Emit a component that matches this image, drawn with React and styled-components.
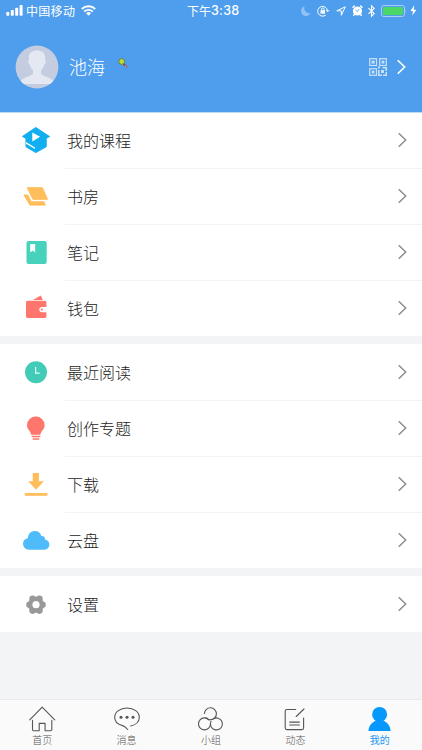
import React from "react";
import styled, { createGlobalStyle } from "styled-components";

const GlobalStyle = createGlobalStyle`
  *, *::before, *::after { box-sizing: border-box; }
  body {
    margin: 0;
    background: #f3f4f6;
    font-family: "Noto Sans CJK SC", sans-serif;
  }
`;

const Screen = styled.div`
  width: 422px;
  height: 750px;
  display: flex;
  flex-direction: column;
  overflow: hidden;
  background: #f3f4f6;
`;

const Header = styled.header`
  position: relative;
  flex: none;
  height: 112px;
  background: #4e9eed;
  color: #fff;
  box-shadow: 0 1px 0 #bcdcf9;
`;

const StatusBar = styled.div`
  display: grid;
  grid-template-columns: 187px 1fr auto;
  align-items: center;
  height: 21px;
  padding-right: 5px;
  font-size: 12px;
  line-height: 21px;
`;

const Carrier = styled.div`
  display: flex;
  align-items: center;
  padding-left: 6px;
  letter-spacing: 0.3px;

  span { margin: 0 6px 0 3px; }
`;

const Clock = styled.time`
  display: flex;
  white-space: nowrap;
  font-size: 12px;
`;

const ClockDigits = styled.span`
  font: 500 12.5px/21px Inter, sans-serif;
  letter-spacing: 0.25px;
`;

const StatusIcons = styled.div`
  display: flex;
  align-items: center;
`;

const Glyph = styled.svg`
  display: block;
  flex: none;
  width: ${(p) => p.$w}px;
  height: ${(p) => p.$h}px;
  margin-left: ${(p) => p.$gap || 0}px;
  overflow: visible;
`;

const Profile = styled.div`
  display: flex;
  align-items: center;
  height: 91px;
  padding: 0 16px 0 15px;
`;

const Name = styled.div`
  margin-left: 10px;
  padding-bottom: 2px;
  font-size: 18px;
  font-weight: 300;
  line-height: 26px;
`;

const BadgeIcon = styled(Glyph)`
  align-self: flex-start;
  margin-top: 37px;
`;

const Spacer = styled.div`
  flex: 1;
`;

const Group = styled.section`
  flex: none;
  margin-bottom: 8px;
  background: #fff;
`;

const Row = styled.div`
  display: flex;
  align-items: center;
  height: 56px;
  padding-left: 21px;
`;

const RowBody = styled.div`
  flex: 1;
  display: flex;
  align-items: center;
  justify-content: space-between;
  height: 56px;
  margin-left: 14px;
  padding: 0 15px 0 2px;
  box-shadow: 0 1px 0 ${(p) => (p.$last ? "transparent" : "#f3f3f4")};
`;

const RowLabel = styled.span`
  padding-bottom: 1px;
  font-size: 16px;
  font-weight: 300;
  line-height: 24px;
  color: #1c1c1c;
`;

const TabBar = styled.nav`
  flex: none;
  display: grid;
  grid-template-columns: repeat(5, 1fr);
  height: 50px;
  margin-top: auto;
  background: #fafafa;
  box-shadow: 0 -1px 0 #e9eaed;
`;

const Tab = styled.div`
  display: flex;
  flex-direction: column;
  align-items: center;
  padding-top: 5px;
  font-size: 10px;
  font-weight: ${(p) => (p.$active ? 400 : 300)};
  line-height: 14px;
  color: ${(p) => (p.$active ? "#2497f3" : "#555")};
`;

const Chevron = ({ color = "#929292", gap = 0 }) => (
  <Glyph $w={10} $h={16} $gap={gap} viewBox="0 0 10 16" fill="none" stroke={color} strokeWidth="1.6">
    <path d="M1.7 1.2 8.7 8 1.7 14.8" />
  </Glyph>
);

const Icon = ({ children, ...rest }) => (
  <Glyph $w={30} $h={30} viewBox="0 0 30 30" {...rest}>{children}</Glyph>
);

const icons = {
  course: (
    <Icon>
      <path fill="#11aef0" stroke="#11aef0" strokeWidth="1" strokeLinejoin="round" d="M14.8 2.5 28.5 11.5 25.2 13.4V21.8L14.8 27.6 5 21.8V13.4L1.5 11.4Z" />
      <path fill="#fff" d="M11.3 7.6v8.8l7.8-4.6ZM5 17l9 5.400v1.700L5 18.700Z" />
    </Icon>
  ),
  books: (
    <Icon fill="#ffbe5c" stroke="#ffbe5c" strokeWidth="1" strokeLinejoin="round">
      <path d="M6.2 6.7H21.4L26.5 18.3H11.9Z" />
      <path d="M2.9 14H6.8L10.2 20.8H23L24.3 24.1H9Z" />
    </Icon>
  ),
  note: (
    <Icon>
      <rect x="5.500" y="4" width="20.2" height="23" rx="2" fill="#46d2bb" />
      <path fill="#fff" d="M9.2 7h5v8.4l-2.5-2-2.5 2Z" />
    </Icon>
  ),
  wallet: (
    <Icon>
      <path fill="#ff766d" d="M11.8 7 19.8 2.6 21.8 7Z" />
      <rect x="5" y="7.7" width="20.4" height="17.2" rx="1.6" fill="#ff766d" />
      <path fill="#fff" d="M26 14H20.9a2.6 2.6 0 0 0 0 5.2H26Z" />
      <circle cx="20.9" cy="16.6" r="1" fill="#ff766d" />
    </Icon>
  ),
  recent: (
    <Icon>
      <circle cx="15" cy="15.3" r="11" fill="#42ccb7" />
      <path fill="none" stroke="#e5fffa" strokeWidth="1.2" d="M14.6 10v6.2h4" />
    </Icon>
  ),
  idea: (
    <Icon>
      <path fill="#ff766d" d="M14.8 3.6a8.7 8.7 0 0 1 8.8 8.6c0 4.3-3.5 5.2-4.2 9.5h-9.2C9.5 17.4 6 16.5 6 12.2a8.7 8.7 0 0 1 8.8-8.6Z" />
      <path fill="none" stroke="#ff766d" strokeWidth="1.3" strokeLinecap="round" d="M11.2 23.5h7.6M12.2 26h5.6" />
    </Icon>
  ),
  download: (
    <Icon fill="#ffbe5c">
      <path d="M11.7 4h6.2v8.2h5L15 20.7 7.2 12.2h4.5Z" />
      <rect x="3.8" y="24" width="22.6" height="2.8" />
    </Icon>
  ),
  cloud: (
    <Icon>
      <path fill="#4fbcfa" d="M7.8 24.7A5.9 5.9 0 0 1 2 18.8c0-2.9 1.9-5 4.8-5.5.1-4.2 3.1-7.3 7-7.3 3.3 0 5.8 1.9 6.6 5 2.3-.2 4 1.5 3.8 3.8 2.5.2 4.2 2.2 4.2 4.8 0 2.8-2 5.1-5 5.1Z" />
    </Icon>
  ),
  settings: (
    <Icon>
      <g fill="#999">
        <circle cx="15" cy="15.7" r="8" />
        <circle cx="8.500" cy="15.7" r="3.3" />
        <circle cx="21.500" cy="15.7" r="3.3" />
        <circle cx="11.6" cy="9.8" r="3.3" />
        <circle cx="18.4" cy="9.8" r="3.3" />
        <circle cx="11.6" cy="21.6" r="3.3" />
        <circle cx="18.4" cy="21.6" r="3.3" />
      </g>
      <circle cx="15" cy="15.7" r="3.6" fill="#fff" />
    </Icon>
  ),
};

const TabIcon = ({ children }) => (
  <Glyph $w={30} $h={28} viewBox="0 0 30 28" fill="none" stroke="#555" strokeWidth="1.1" strokeLinejoin="round" strokeLinecap="round">
    {children}
  </Glyph>
);

const tabs = [
  {
    label: "首页",
    icon: (
      <TabIcon>
        <path d="M2.7 14.8 15.2 2.2 27.7 14.8M5.5 15.3V24.6q0 1.1 1.1 1.1H12.2V18.4H18.1V25.7H23.7q1.1 0 1.1-1.1V15.3" />
      </TabIcon>
    ),
  },
  {
    label: "消息",
    icon: (
      <TabIcon>
        <path d="M18.6 21C23.8 20 27.3 16.6 27.3 12.4 27.3 7 21.8 3 15 3S2.7 7 2.7 12.4C2.7 16.3 5.8 19.3 10.6 20.6 12.7 21.2 14 22.4 15.7 24.5" />
        <g fill="#555" stroke="none">
          <circle cx="9" cy="12.3" r="1.5" />
          <circle cx="15" cy="12.3" r="1.5" />
          <circle cx="21" cy="12.3" r="1.5" />
        </g>
      </TabIcon>
    ),
  },
  {
    label: "小组",
    icon: (
      <TabIcon>
        <circle cx="14.4" cy="8.8" r="6" strokeDasharray="32 5.7" transform="rotate(183 14.4 8.8)" />
        <circle cx="8.5" cy="18.9" r="6" strokeDasharray="33 4.7" transform="rotate(-3 8.500 18.900)" />
        <circle cx="20.4" cy="18.9" r="6" strokeDasharray="33 4.7" transform="rotate(-118 20.400 18.900)" />
      </TabIcon>
    ),
  },
  {
    label: "动态",
    icon: (
      <TabIcon>
        <path d="M15.7 4.5H6.8Q5.2 4.5 5.2 6.1V23Q5.2 24.6 6.8 24.6H22Q23.6 24.6 23.6 23V13M16.2 11.5 24 4M9.7 17.1H19.4M9.7 20H19.4" />
      </TabIcon>
    ),
  },
  {
    label: "我的",
    active: true,
    icon: (
      <TabIcon>
        <g fill="#0798fb" stroke="none">
          <circle cx="14.6" cy="9.4" r="7.5" />
          <path d="M3.4 26C3.8 20.5 7.2 17 11.5 15.6h6.2C22 17 25.2 20.5 25.6 26Z" />
        </g>
      </TabIcon>
    ),
  },
];

const groups = [
  [
    ["course", "我的课程"],
    ["books", "书房"],
    ["note", "笔记"],
    ["wallet", "钱包"],
  ],
  [
    ["recent", "最近阅读"],
    ["idea", "创作专题"],
    ["download", "下载"],
    ["cloud", "云盘"],
  ],
  [["settings", "设置"]],
];

const Signal = () => (
  <Glyph $w={17} $h={11} viewBox="0 0 17 11" fill="#fff">
    <rect x="0.3" y="7" width="3" height="3.8" rx="0.7" />
    <rect x="4.8" y="5" width="3" height="5.8" rx="0.7" />
    <rect x="9.2" y="2.7" width="3" height="8.1" rx="0.7" />
    <rect x="13.6" y="0" width="3" height="10.8" rx="0.7" />
  </Glyph>
);

const Wifi = () => (
  <Glyph $w={15} $h={11} viewBox="0 0 15 11" fill="none" stroke="#fff" strokeWidth="1.9">
    <path d="M.8 4A9.6 9.6 0 0 1 14.2 4M3.2 6.6A6.2 6.2 0 0 1 11.8 6.6" />
    <path fill="#fff" stroke="none" d="M7.5 10.8 5 8.2a3.7 3.7 0 0 1 5 0Z" />
  </Glyph>
);

const StatusGlyphs = () => (
  <StatusIcons>
    <Glyph $w={10} $h={10} viewBox="0 0 10 10" fill="#91c1f3">
      <path d="M3.4.3A5 5 0 1 0 9.6 7 5.2 5.2 0 0 1 3.4.3Z" />
    </Glyph>
    <Glyph $w={12} $h={12} $gap={6} viewBox="0 0 12 12" fill="none" stroke="#fff" strokeWidth="1">
      <path d="M8.8 10A4.9 4.9 0 1 1 10.5 5.8M9 5.2l1.6 1.6 1.4-1.6M4.5 5.6V4.2a1.2 1.2 0 0 1 2.5 0v1.4" />
      <rect x="3.5" y="5.3" width="4.5" height="3.4" fill="#fff" stroke="none" />
    </Glyph>
    <Glyph $w={10} $h={10} $gap={7} viewBox="0 0 10 10" fill="none" stroke="#fff" strokeWidth="1" strokeLinejoin="round">
      <path d="M.8 4.8 9.3.8 5.3 9.3V4.8Z" />
    </Glyph>
    <Glyph $w={11} $h={11} $gap={6} viewBox="0 0 11 11">
      <circle cx="5.5" cy="6" r="4.6" fill="#fff" />
      <path fill="none" stroke="#fff" strokeWidth="1.5" strokeLinecap="round" d="M1 2.3 2.3 1.1M8.700 1.1l1.3 1.200M2.4 9.5l-.7.8M8.6 9.5l.7.8" />
      <path fill="none" stroke="#4e9eed" strokeWidth="0.8" d="M3.5 5.2 5.5 6.5 7.1 4.200" />
    </Glyph>
    <Glyph $w={7} $h={12} $gap={5} viewBox="0 0 7 12" fill="none" stroke="#fff" strokeWidth="1.1">
      <path d="M.5 3.2 6.2 8.6 3.5 11.2V.8L6.2 3.4.5 8.8" />
    </Glyph>
    <Glyph $w={26} $h={12} $gap={6} viewBox="0 0 26 12">
      <rect x="0.5" y="0.5" width="23" height="11" rx="2.3" fill="none" stroke="#a8cff7" />
      <rect x="2" y="2" width="20" height="8" rx="1" fill="#4cd667" />
      <path fill="#a8cff7" d="M24.7 4.2q1.4 1.8 0 3.6Z" />
    </Glyph>
    <Glyph $w={7} $h={11} $gap={3} viewBox="0 0 7 11" fill="#fff">
      <path d="M4.2.3.4 6h2.5L2.3 10.6 6.4 4.7H3.8Z" />
    </Glyph>
  </StatusIcons>
);

const Avatar = () => (
  <Glyph $w={44} $h={44} viewBox="0 0 44 44">
    <defs>
      <clipPath id="avatar-clip"><circle cx="22" cy="22" r="21.4" /></clipPath>
    </defs>
    <g clipPath="url(#avatar-clip)">
      <rect width="44" height="44" fill="#c4cce0" />
      <path fill="#e4e8f2" d="M14 14C13 8 17 5.5 22 5.5S31 8 30 14l.7 1.4c.4 1.7-.4 3.5-1.3 4.2-.7 2.7-1.9 4.5-3.4 5.6v3.3c1.6 3.3 12 3.5 14.5 10.5H3.5C6 32 16.4 31.8 18 28.5v-3.3c-1.5-1.1-2.7-2.9-3.4-5.6-.9-.7-1.7-2.5-1.3-4.2Z" />
    </g>
  </Glyph>
);

const QrCode = () => (
  <Glyph $w={18} $h={18} viewBox="0 0 18 18" fill="none" stroke="#c9e1fa" strokeWidth="1.2">
    <rect x=".7" y=".7" width="6.8" height="6.8" />
    <rect x="10.7" y=".7" width="6.6" height="6.8" />
    <rect x=".7" y="10.7" width="6.8" height="6.6" />
    <g fill="#c9e1fa" stroke="none">
      <rect x="2.6" y="2.6" width="3" height="3" />
      <rect x="12.6" y="2.7" width="2.8" height="2.8" />
      <rect x="2.7" y="12.6" width="2.8" height="2.8" />
      <path d="M9 8.5h2v2H9ZM13.5 9H18v4h-1.5v-2.5h-3ZM9 12h1.6v4.4H13V18H9ZM12 12h3v3h-3ZM16.5 14H18v4h-4v-1.5h2.5Z" />
    </g>
  </Glyph>
);

export default function App() {
  return (
    <Screen>
      <GlobalStyle />
      <Header>
        <StatusBar>
          <Carrier>
            <Signal />
            <span>中国移动</span>
            <Wifi />
          </Carrier>
          <Clock>下午<ClockDigits>3:38</ClockDigits></Clock>
          <StatusGlyphs />
        </StatusBar>
        <Profile>
          <Avatar />
          <Name>池海</Name>
          <BadgeIcon $w={11} $h={11} $gap={13} viewBox="0 0 11 11">
            <path stroke="#994958" strokeWidth="2" d="M5.5 6 8.800 9.300" />
            <circle cx="3.7" cy="3.5" r="2.9" fill="#b5df32" stroke="#657148" strokeWidth="0.9" />
            <path fill="#e7b1a5" d="M7 7.800h1.2V9H7Z" />
          </BadgeIcon>
          <Spacer />
          <QrCode />
          <Chevron color="#fff" gap={9} />
        </Profile>
      </Header>
      {groups.map((rows, g) => (
        <Group key={g}>
          {rows.map(([icon, label], i) => (
            <Row key={label}>
              {icons[icon]}
              <RowBody $last={i === rows.length - 1}>
                <RowLabel>{label}</RowLabel>
                <Chevron />
              </RowBody>
            </Row>
          ))}
        </Group>
      ))}
      <TabBar>
        {tabs.map((tab) => (
          <Tab key={tab.label} $active={tab.active}>
            {tab.icon}
            <span>{tab.label}</span>
          </Tab>
        ))}
      </TabBar>
    </Screen>
  );
}
